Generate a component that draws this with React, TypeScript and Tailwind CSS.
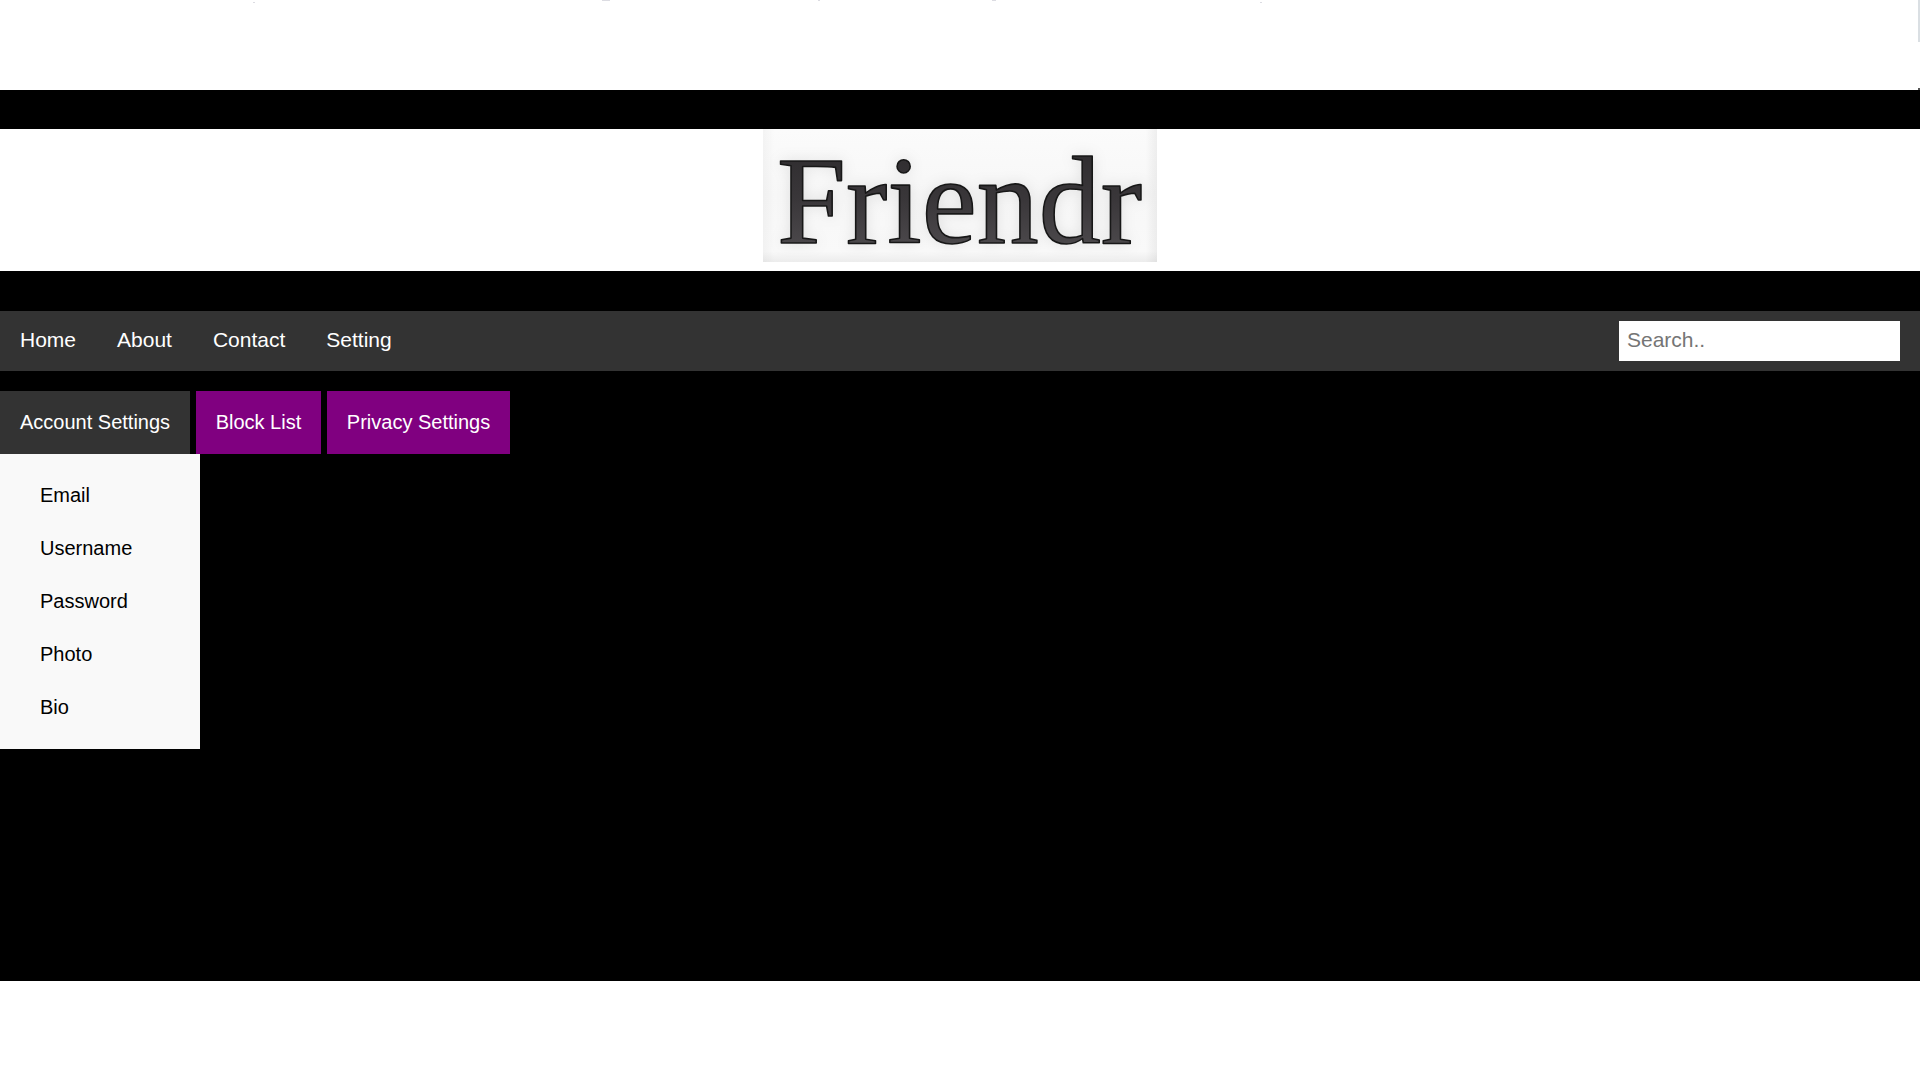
import React from "react";

const navLinks = ["Home", "About", "Contact", "Setting"];
const accountLinks = ["Email", "Username", "Password", "Photo", "Bio"];

function TopStrip() {
  return (
    <div aria-hidden="true" className="flex h-[90px] justify-between overflow-hidden bg-white">
      <svg width="1262" height="3" className="shrink" fill="#dcdce2">
        <rect x="253" y="2" width="2" height="1" />
        <rect x="602" y="0" width="8" height="1" />
        <rect x="818" y="0" width="2" height="1" />
        <rect x="992" y="0" width="4" height="1" />
        <rect x="1260" y="2" width="2" height="1" />
      </svg>
      <div className="flex w-[2px] flex-col justify-between">
        <div className="h-[42px] bg-[#dadfe3]" />
        <div className="h-[2px] bg-[#555555]" />
      </div>
    </div>
  );
}

function Logo() {
  return (
    <svg
      role="img"
      aria-label="Friendr"
      width="394"
      height="133"
      viewBox="0 0 394 133"
      className="block overflow-visible"
    >
      <defs>
        <linearGradient id="paper" x1="0" y1="0" x2="0" y2="1">
          <stop offset="0" stopColor="#fbfbfb" />
          <stop offset="0.5" stopColor="#f7f7f7" />
          <stop offset="0.92" stopColor="#f9f9f9" />
          <stop offset="1" stopColor="#ececec" />
        </linearGradient>
        <linearGradient id="edge" x1="0" y1="0" x2="1" y2="0">
          <stop offset="0" stopColor="#000" stopOpacity="0.03" />
          <stop offset="0.03" stopColor="#000" stopOpacity="0" />
          <stop offset="0.97" stopColor="#000" stopOpacity="0" />
          <stop offset="1" stopColor="#000" stopOpacity="0.05" />
        </linearGradient>
        <linearGradient id="ink" x1="0" y1="0" x2="0" y2="1">
          <stop offset="0" stopColor="#2b292b" />
          <stop offset="0.5" stopColor="#3a373a" />
          <stop offset="1" stopColor="#555255" />
        </linearGradient>
      </defs>
      <rect width="394" height="133" fill="url(#paper)" />
      <rect width="394" height="133" fill="url(#edge)" />
      <text
        x="14"
        y="114"
        fontFamily="'Liberation Serif', serif"
        fontSize="124"
        fill="url(#ink)"
        stroke="#171717"
        strokeWidth="1.6"
        strokeLinejoin="round"
        className="drop-shadow-[0_0_7px_rgba(0,0,0,0.1)]"
      >
        Friendr
      </text>
    </svg>
  );
}

export default function App() {
  return (
    <div className="flex min-h-screen flex-col bg-white font-['Liberation_Sans',Arial,sans-serif]">
      <TopStrip />

      <main className="flex min-h-[891px] flex-col bg-black pt-[39px]">
        <header className="flex justify-center bg-white pb-[9px]">
          <Logo />
        </header>

        <nav className="mt-10 flex items-center justify-between bg-[#333333] pr-5">
          <ul className="flex gap-px">
            {navLinks.map((label) => (
              <li key={label}>
                <a href="#" className="block px-5 pt-[17px] pb-[19px] text-[21px] leading-6 text-white">
                  {label}
                </a>
              </li>
            ))}
          </ul>
          <input
            type="text"
            aria-label="Search"
            placeholder="Search.."
            className="h-10 w-[281px] bg-white px-2 pb-[2px] text-[21px] text-black placeholder:text-[#757575]"
          />
        </nav>

        <div className="mt-5 text-[20px] leading-[23px]">
          <div className="relative inline-block align-top">
            <button type="button" aria-expanded="true" className="block bg-[#333333] p-5 text-white">
              Account Settings
            </button>
            <ul className="absolute left-0 top-full z-10 flex w-[200px] flex-col bg-[#f9f9f9] py-[15px]">
              {accountLinks.map((label) => (
                <li key={label}>
                  <a href="#" className="block px-10 py-[15px] text-black">
                    {label}
                  </a>
                </li>
              ))}
            </ul>
          </div>{" "}
          <button type="button" className="bg-[#800080] p-5 align-top text-white">
            Block List
          </button>{" "}
          <button type="button" className="bg-[#800080] p-5 align-top text-white">
            Privacy Settings
          </button>
        </div>
      </main>
    </div>
  );
}
